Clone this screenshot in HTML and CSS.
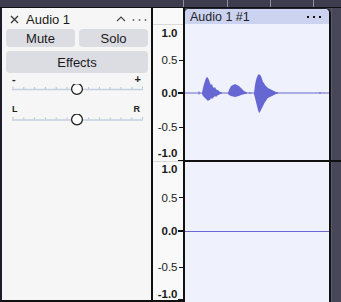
FILE: index.html
```html
<!doctype html>
<html lang="en">
  <head>
    <meta name="viewport" content="width=device-width">
    <title>Audio 1</title>

    <link rel="stylesheet" href="styles.css">
  </head>
  <body>
    <div class="band">
      <svg width="341" height="7">
        <path d="M183.5 0V7M227.5 0V7M270.5 0V7M313.5 0V7" stroke="#8e8ea0" stroke-width="1"/>
      </svg>
    </div>

    <div class="main">
      <div class="tcp">
        <div class="tcp-head">
          <svg class="close" width="9" height="9" viewBox="0 0 9 9">
            <path d="M1 1L8 8M8 1L1 8" stroke="#333" stroke-width="1.2"/>
          </svg>
          <span class="name">Audio 1</span>
          <svg class="collapse" width="10" height="6" viewBox="0 0 10 6">
            <path d="M1 5L5 1L9 5" fill="none" stroke="#444" stroke-width="1.1"/>
          </svg>
          <svg class="menu" width="15" height="4" viewBox="0 0 15 4">
            <circle cx="1.5" cy="2" r="0.9" fill="#666"/>
            <circle cx="7.5" cy="2" r="0.9" fill="#666"/>
            <circle cx="13.5" cy="2" r="0.9" fill="#666"/>
          </svg>
        </div>

        <div class="btn-row">
          <button>Mute</button>
          <button>Solo</button>
        </div>
        <button class="effects">Effects</button>

        <div class="scale gain-scale"><span>-</span><span>+</span></div>
        <svg class="slider" width="142" height="12" viewBox="6 84 142 12">
          <path d="M13 86.5v2M23.8 87v2M34.6 87v2M45.4 87v2M56.2 87v2M67 87v2M88.6 87v2M99.4 87v2M110.2 87v2M121 87v2M131.8 87v2M142.5 86.5v2" stroke="#b3c0d3" stroke-width="1"/>
          <line x1="12" y1="89.5" x2="143" y2="89.5" stroke="#c3cfe0" stroke-width="1.6"/>
          <circle cx="77" cy="89" r="5.4" fill="#fff" stroke="#222" stroke-width="1.3"/>
        </svg>

        <div class="scale pan-scale"><span>L</span><span>R</span></div>
        <svg class="slider" width="142" height="12" viewBox="6 114 142 12">
          <path d="M13 117v2M23.8 117.5v2M34.6 117.5v2M45.4 117.5v2M56.2 117.5v2M67 117.5v2M88.6 117.5v2M99.4 117.5v2M110.2 117.5v2M121 117.5v2M131.8 117.5v2M142.5 117v2" stroke="#b3c0d3" stroke-width="1"/>
          <line x1="12" y1="120" x2="143" y2="120" stroke="#c3cfe0" stroke-width="1.6"/>
          <circle cx="77" cy="119.5" r="5.4" fill="#fff" stroke="#222" stroke-width="1.3"/>
        </svg>
      </div>

      <div class="ruler">
        <svg width="30" height="292" viewBox="153 8 30 292">
          <path d="M153 24.5H183M153 161.5H183" stroke="#dadada" stroke-width="1"/>
          <g stroke="#111" stroke-width="1">
            <path d="M179 60.5H183M179 127.5H183M179 197.5H183M179 267.5H183M178 160.5H183M178 299.5H183"/>
            <path d="M178 93H183M178 231H183" stroke-width="2"/>
          </g>
          <text x="177.5" y="36.8" class="b">1.0</text>
          <text x="177.5" y="64.3">0.5</text>
          <text x="177.5" y="97.3" class="b">0.0</text>
          <text x="177.5" y="131.3">-0.5</text>
          <text x="177.5" y="156.8" class="b">-1.0</text>
          <text x="177.5" y="173.3" class="b">1.0</text>
          <text x="177.5" y="201.8">0.5</text>
          <text x="177.5" y="235.3" class="b">0.0</text>
          <text x="177.5" y="271.3">-0.5</text>
          <text x="177.5" y="297.8" class="b">-1.0</text>
        </svg>
      </div>

      <div class="lane">
        <div class="chan chan-top">
          <div class="clip">
            <div class="clip-head">
              <span class="clip-name">Audio 1 #1</span>
              <span class="clip-dots"><i></i><i></i><i></i></span>
            </div>
            <svg class="wave" width="144" height="136" viewBox="185 24 144 136">
              <line x1="185" y1="93" x2="329" y2="93" stroke="#6868d0" stroke-width="1"/>
              <polygon fill="#6767d3" points="202,93 203,88 204,84 205,81 206,78 207,77 208,78 209,80 210,83 211,85 212,84 213,87 214,88 215,87 216,89 217,90 218,90 219,91 220,92 222,92.5 222,93.5 220,94 219,95 218,95 217,96 216,97 215,96 214,97 213,98 212,99 211,98 210,100 209,100 208,101 207,100 206,99 205,98 204,97 203,96 202,94"/>
              <polygon fill="#6767d3" points="228,93 229,90 230,88 231,86 233,85 235,84 237,85 239,86 240,87 241,88 242,89 243,90 244,91 245,91.5 247,92.5 247,93.5 245,94 243,94.5 241,95 239,96 237,96.5 235,97 233,96.5 231,96 229,95 228,94"/>
              <polygon fill="#6767d3" points="254,93 255,85 256,80 257,77 258,75 259,74 260,75 261,76 262,79 263,82 264,83 265,85 266,86 267,87 268,88 270,89 272,90 274,91 276,92 278,92.5 278,93.5 276,94 274,95 272,96 270,97 268,98 267,99 266,101 265,102 264,104 263,106 262,108 261,110 260,112 259,113 258,110 257,106 256,102 255,98 254,94"/>
              <path d="M199 91.5v3M250 92v2M320 92v2" stroke="#6767d3" stroke-width="1"/>
            </svg>
          </div>
          <div class="gutter"></div>
        </div>
        <div class="sep"></div>
        <div class="chan chan-bottom">
          <div class="clip">
            <div class="zero"></div>
          </div>
          <div class="gutter"></div>
        </div>
      </div>
    </div>
  </body>
</html>
```

FILE: styles.css
```css
* { box-sizing: border-box; }

html, body {
  margin: 0;
}

body {
  width: 341px;
  height: 302px;
  overflow: hidden;
  font-family: "Liberation Sans", Arial, sans-serif;
  background: #474759;
  color: #1a1a1a;
}

svg { display: block; }

.band {
  height: 8px;
  background: #3d3d4f;
  border-bottom: 1px solid #111;
}

.main {
  display: flex;
  height: 294px;
}

/* track control panel */
.tcp {
  width: 153px;
  background: #f6f6f6;
  border-left: 2px solid #1d1d29;
  border-right: 2px solid #111;
  border-bottom: 2px solid #111;
  padding: 0 3px 0 4px;
  display: flex;
  flex-direction: column;
}

.tcp-head {
  height: 21px;
  display: flex;
  align-items: center;
}

.close {
  margin: 1px 0 0 4px;
}

.name {
  font-size: 13px;
  margin-left: 7px;
  margin-top: 1px;
  flex: 1;
}

.collapse {
  margin-right: 6px;
}

.menu {
  margin: 2px 1px 0 0;
}

button {
  font-family: "Liberation Sans", Arial, sans-serif;
  font-size: 13px;
  color: #1a1a1a;
  background: #dcdde3;
  border: none;
  border-radius: 4px;
  padding: 0;
  cursor: pointer;
}

.btn-row {
  display: flex;
  gap: 4px;
  height: 18px;
}

.btn-row button {
  flex: 1;
}

.effects {
  margin-top: 4px;
  height: 22px;
}

.scale {
  display: flex;
  justify-content: space-between;
  height: 10px;
  line-height: 10px;
  font-weight: bold;
  color: #222;
  padding: 0 7px 0 6px;
}

.gain-scale {
  margin-top: 1px;
  font-size: 11px;
}

.pan-scale {
  margin-top: 8px;
  font-size: 9px;
  padding: 0 8px 0 6px;
}

/* vertical ruler */
.ruler {
  width: 32px;
  background: #f9f9f9;
  border-right: 2px solid #111;
  border-bottom: 2px solid #111;
}

.ruler text {
  font-size: 11.5px;
  text-anchor: end;
  fill: #1a1a1a;
}

.ruler text.b {
  font-weight: bold;
}

/* clip lane */
.lane {
  flex: 1;
  display: flex;
  flex-direction: column;
}

.chan {
  display: flex;
}

.chan-top {
  height: 152px;
}

.chan-bottom {
  flex: 1;
}

.clip {
  width: 146px;
  background: #eff1fd;
  border-right: 2px solid #111;
  display: flex;
  flex-direction: column;
}

.chan-top .clip {
  border-top: 1px solid #22222e;
  border-radius: 5px 6px 0 0;
}

.clip-head {
  height: 15px;
  background: #ccd3f1;
  border-radius: 4px 4px 0 0;
  display: flex;
  align-items: center;
  padding: 0 8px 0 5px;
}

.clip-name {
  font-size: 12.5px;
  color: #222;
  flex: 1;
}

.clip-dots {
  display: flex;
  gap: 4px;
  margin-top: 1px;
}

.clip-dots i {
  width: 2px;
  height: 2px;
  background: #111;
}

.zero {
  height: 1px;
  margin-top: 69px;
  background: #6868d0;
}

.gutter {
  flex: 1;
  border-left: 1px solid #5a5a6c;
}

.sep {
  height: 2px;
  background: #111;
}
```
